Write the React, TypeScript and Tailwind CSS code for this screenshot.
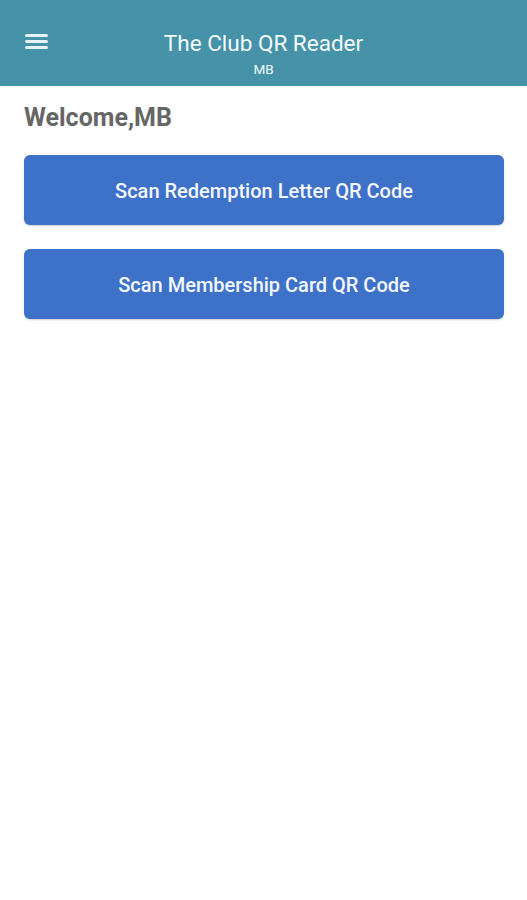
import { useState } from 'react';

const buttons = ['Scan Redemption Letter QR Code', 'Scan Membership Card QR Code'];

export default function App() {
  const [last, setLast] = useState<string | null>(null);

  return (
    <div className="min-h-[900px] w-full bg-white font-['Roboto',sans-serif]">
      <header className="relative flex h-[86px] flex-col items-center bg-[#4692a8] pt-[30px] text-white">
        <button className="absolute left-[25px] top-[33px] flex h-[17px] w-[23px] flex-col justify-between py-[1px]">
          <span className="block h-[3px] w-full rounded-sm bg-[#e6f4f7]" />
          <span className="block h-[3px] w-full rounded-sm bg-[#e6f4f7]" />
          <span className="block h-[3px] w-full rounded-sm bg-[#e6f4f7]" />
        </button>
        <h1 className="text-[22.5px] leading-[26px] text-[#f2fafb]">The Club QR Reader</h1>
        <p className="mt-[5px] text-[13.5px] leading-[16px] text-[#f2fafb]">MB</p>
      </header>
      <main className="pl-6 pr-[23px] pt-[17px]">
        <h2 className="text-[25px] font-bold leading-[30px] text-[#666666]">Welcome,MB</h2>
        <div className="mt-[22px] flex flex-col gap-[24px]">
          {buttons.map((label) => (
            <button
              key={label}
              onClick={() => setLast(label)}
              className="flex h-[70px] w-full items-center justify-center rounded-md bg-[#3e71c8] pt-[2px] text-[20px] font-medium text-[#f4f7fc] shadow-[0_1px_2px_rgba(0,0,0,0.2)]"
            >
              {label}
            </button>
          ))}
        </div>
        {last && <p className="sr-only">{last}</p>}
      </main>
    </div>
  );
}
